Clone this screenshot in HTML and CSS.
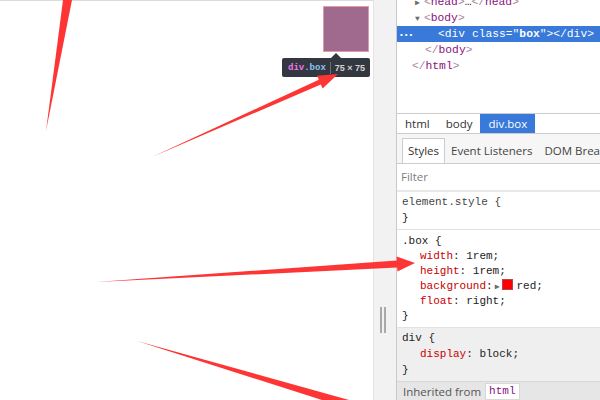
FILE: index.html
```html
<!DOCTYPE html>
<html lang="en">
  <head>
    <meta charset="UTF-8" />
    <meta name="viewport" content="width=device-width, initial-scale=1.0" />
    <title>Inspect div.box</title>
    <link rel="stylesheet" href="styles.css">
  </head>
  <body>
    <div class="window">
      <!-- Halaman yang diinspeksi -->
      <div class="page">
        <div class="box-row">
          <div class="box"></div>
        </div>
        <div class="tooltip">
          <span class="tip-tag">div</span><span class="tip-class">.box</span>
          <span class="tip-sep"></span>
          <span class="tip-size">75 &times; 75</span>
        </div>
      </div>

      <div class="splitter"><span class="grip"></span></div>

      <!-- Panel DevTools -->
      <div class="devtools">
        <div class="elements">
          <div class="tree">
            <div class="node lvl-1"><span class="tri">&#9654;</span><span class="br">&lt;</span><span class="tag">head</span><span class="br">&gt;</span>&hellip;<span class="br">&lt;/</span><span class="tag">head</span><span class="br">&gt;</span></div>
            <div class="node lvl-1"><span class="tri">&#9660;</span><span class="br">&lt;</span><span class="tag">body</span><span class="br">&gt;</span></div>
            <div class="node selected"><span class="dots">&bull;&bull;&bull;</span>&lt;div class="<b>box</b>"&gt;&lt;/div&gt;</div>
            <div class="node lvl-1b"><span class="br">&lt;/</span><span class="tag">body</span><span class="br">&gt;</span></div>
            <div class="node lvl-0"><span class="br">&lt;/</span><span class="tag">html</span><span class="br">&gt;</span></div>
          </div>
        </div>

        <div class="crumbs">
          <span class="crumb">html</span>
          <span class="crumb">body</span>
          <span class="crumb active">div.box</span>
        </div>

        <div class="tabs">
          <span class="tab active">Styles</span>
          <span class="tab">Event Listeners</span>
          <span class="tab">DOM Breakpoints</span>
        </div>

        <div class="filter">Filter</div>

        <div class="rule rule-element">
          <div class="sel muted">element.style {</div>
          <div>}</div>
        </div>

        <div class="rule rule-box">
          <div class="sel">.box {</div>
          <div class="prop"><span class="name">width</span>: 1rem;</div>
          <div class="prop"><span class="name">height</span>: 1rem;</div>
          <div class="prop"><span class="name">background</span>:<span class="expand">&#9654;</span><span class="swatch"></span>red;</div>
          <div class="prop"><span class="name">float</span>: right;</div>
          <div>}</div>
        </div>

        <div class="rule rule-ua">
          <div class="sel">div {</div>
          <div class="prop"><span class="name">display</span>: block;</div>
          <div>}</div>
        </div>

        <div class="inherited">Inherited from <span class="inh-tag">html</span></div>
      </div>

      <!-- Panah anotasi -->
      <svg class="arrows" width="600" height="400" viewBox="0 0 600 400">
        <polygon points="63,0 72,0 46,131" />
        <polygon points="152,157 320.8,84.4 322.6,88.5 338,74 317,75.7 318.8,79.8" />
        <polygon points="96,282 397.2,267.5 397.4,271.5 415,263 396.6,256.5 396.8,260.5" />
        <polygon points="137,341 349,400 322,400" />
      </svg>
    </div>
  </body>
</html>
```

FILE: styles.css
```css
body {
  margin: 0;
  font-family: "Open Sans", Arial, sans-serif;
  background: #ffffff;
}

.window {
  position: relative;
  display: flex;
  width: 600px;
  height: 400px;
  overflow: hidden;
}

/* Halaman kiri */
.page {
  position: relative;
  width: 373px;
  flex-shrink: 0;
  border-top: 1px solid #dcdcdc;
  box-sizing: border-box;
  background: #ffffff;
}

.box-row {
  display: flex;
  justify-content: flex-end;
  padding: 5px 4px 0 0;
}

.box {
  width: 46px;
  height: 46px;
  box-sizing: border-box;
  background-color: #a06a8f;
  border: 1px solid #e49aa6;
}

.tooltip {
  position: absolute;
  left: 282px;
  top: 57px;
  width: 88px;
  height: 19px;
  display: flex;
  align-items: center;
  padding-left: 6px;
  box-sizing: border-box;
  background: #333740;
  border-radius: 2px;
  font-family: "Liberation Mono", monospace;
  font-size: 9px;
  font-weight: bold;
  white-space: nowrap;
}

.tooltip::before {
  content: "";
  position: absolute;
  left: 49px;
  top: -5px;
  border-left: 5px solid transparent;
  border-right: 5px solid transparent;
  border-bottom: 5px solid #333740;
}

.tip-tag {
  color: #ee78e6;
}

.tip-class {
  color: #8cc4f5;
}

.tip-sep {
  width: 1px;
  height: 12px;
  margin: 0 4px;
  background: #6a6d74;
}

.tip-size {
  color: #d4d4d4;
  font-family: "Liberation Sans", Arial, sans-serif;
  font-size: 9px;
}

/* Pembatas */
.splitter {
  width: 24px;
  flex-shrink: 0;
  box-sizing: border-box;
  background: #f2f2f2;
  border-left: 1px solid #e4e4e4;
  border-right: 1px solid #c9c9c9;
  display: flex;
  flex-direction: column;
}

.grip {
  width: 2px;
  height: 26px;
  margin: 307px 0 0 6px;
  border-left: 2px solid #a9a9a9;
  border-right: 2px solid #a9a9a9;
}

/* DevTools */
.devtools {
  flex: 1;
  min-width: 0;
  display: flex;
  flex-direction: column;
  font-size: 11.5px;
  color: #222;
  background: #ffffff;
  overflow: hidden;
}

.elements {
  height: 113px;
  flex-shrink: 0;
  overflow: hidden;
  font-family: "Liberation Mono", monospace;
  font-size: 11.3px;
}

.tree {
  margin-top: -6px;
}

.node {
  height: 16px;
  line-height: 16px;
  white-space: nowrap;
}

.lvl-0 {
  padding-left: 15px;
}

.lvl-1 {
  padding-left: 18px;
}

.lvl-1b {
  padding-left: 28px;
}

.tri {
  display: inline-block;
  width: 9px;
  font-size: 8px;
  color: #6e6e6e;
}

.br {
  color: #a8849f;
}

.tag {
  color: #881280;
}

.selected {
  background: #3879d9;
  color: #ffffff;
}

.selected b {
  font-weight: bold;
}

.dots {
  display: inline-block;
  width: 41px;
  padding-left: 2px;
  box-sizing: border-box;
  font-size: 8px;
}

.crumbs {
  display: flex;
  height: 19px;
  flex-shrink: 0;
  border-top: 1px solid #cccccc;
  line-height: 19px;
}

.crumb {
  padding: 0 8px;
  color: #333;
}

.crumb.active {
  background: #3879d9;
  color: #ffffff;
}

.tabs {
  display: flex;
  align-items: stretch;
  height: 25px;
  flex-shrink: 0;
  padding: 4px 0 0 5px;
  background: #f6f6f6;
  border-top: 1px solid #cccccc;
  border-bottom: 1px solid #cccccc;
  white-space: nowrap;
}

.tab {
  padding: 0 5px;
  line-height: 24px;
  color: #444;
  border: 1px solid transparent;
  border-bottom: none;
}

.tab.active {
  background: #ffffff;
  border-color: #cccccc;
  color: #333;
}

.filter {
  height: 26px;
  flex-shrink: 0;
  line-height: 26px;
  padding-left: 4px;
  color: #808080;
  border-bottom: 2px solid #e8e8e8;
}

.rule {
  flex-shrink: 0;
  padding: 2px 0 3px 5px;
  font-family: "Liberation Mono", monospace;
  font-size: 11px;
  line-height: 16px;
  border-bottom: 1px solid #e2e2e2;
  white-space: nowrap;
}

.rule-box {
  padding-top: 4px;
  line-height: 15px;
}

.rule-ua {
  background: #efefef;
  border-bottom: none;
}

.muted {
  color: #444;
}

.prop {
  padding-left: 18px;
}

.name {
  color: #c80000;
}

.expand {
  display: inline-block;
  font-size: 8px;
  color: #6e6e6e;
  margin: 0 3px 0 2px;
}

.swatch {
  display: inline-block;
  width: 9px;
  height: 9px;
  margin-right: 3px;
  background: #ff0000;
  border: 1px solid #bb4444;
  vertical-align: -1px;
}

.inherited {
  flex: 1;
  display: flex;
  align-items: center;
  padding-left: 6px;
  background: #e6e6e6;
  border-top: 1px solid #d6d6d6;
  color: #555;
  font-size: 11.5px;
  white-space: nowrap;
}

.inh-tag {
  margin-left: 4px;
  padding: 0 3px;
  background: #ffffff;
  border: 1px solid #d8d8d8;
  color: #881280;
  font-family: "Liberation Mono", monospace;
  font-size: 11px;
  line-height: 15px;
}

/* Panah anotasi merah */
.arrows {
  position: absolute;
  left: 0;
  top: 0;
  pointer-events: none;
}

.arrows polygon {
  fill: #fd3535;
}
```
